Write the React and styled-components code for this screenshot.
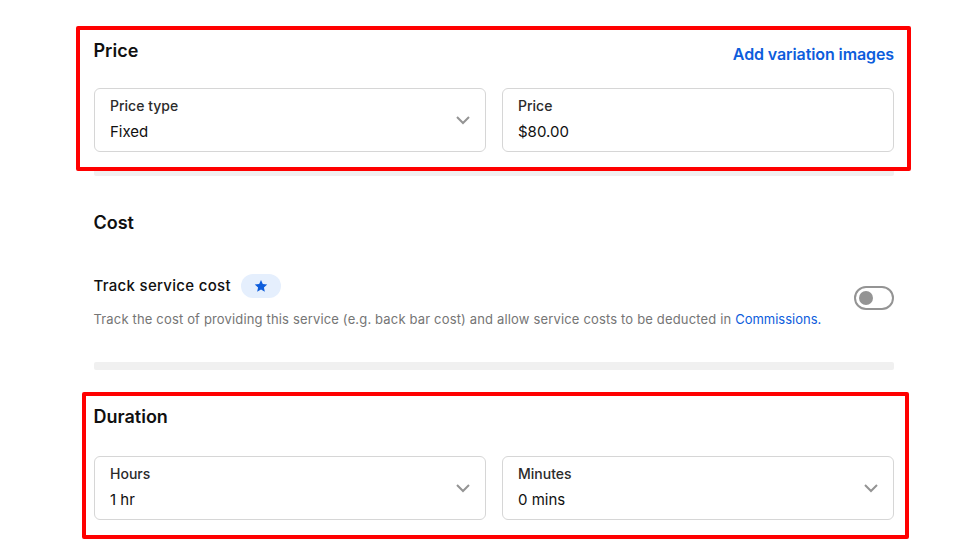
import React from 'react';
import styled, { createGlobalStyle } from 'styled-components';

const GlobalStyle = createGlobalStyle`
  html, body {
    margin: 0;
    padding: 0;
    background: #fff;
    overflow: hidden;
  }
  body {
    font-family: Inter, "Liberation Sans", sans-serif;
    color: #101010;
  }
`;

const Page = styled.div`
  position: relative;
  width: 962px;
  height: 544px;
  overflow: hidden;
  box-sizing: border-box;
  padding: 39px 68px 0 94px;
`;

const Section = styled.section`
  display: flex;
  flex-direction: column;
`;

const HeaderRow = styled.div`
  display: flex;
  justify-content: space-between;
  align-items: flex-start;
  height: ${(p) => p.$height}px;
`;

const Heading = styled.h2`
  margin: 0 0 0 -0.5px;
  font-size: 18px;
  line-height: 24px;
  font-weight: 600;
  color: #101010;
`;

const TextLink = styled.a`
  font-size: 16px;
  line-height: 24px;
  font-weight: 600;
  letter-spacing: -0.1px;
  color: #0d5ddc;
  margin-top: 3px;
`;

const FieldRow = styled.div`
  display: grid;
  grid-template-columns: 1fr 1fr;
  gap: 16px;
`;

const Field = styled.div`
  height: 64px;
  box-sizing: border-box;
  border: 1px solid #d6d6d6;
  border-radius: 6px;
  padding: 7px 15px;
  display: flex;
  align-items: center;
  justify-content: space-between;
  background: #fff;
`;

const FieldText = styled.div`
  display: flex;
  flex-direction: column;
`;

const FieldLabel = styled.span`
  font-size: 14px;
  line-height: 20px;
  font-weight: 500;
  color: #2b2b2b;
`;

const FieldValue = styled.span`
  font-size: 15px;
  line-height: 24px;
  margin-top: 4px;
  color: #101010;
`;

const Chevron = styled.svg`
  width: 16px;
  height: 16px;
  margin: 0 -1px 0 0;
  fill: none;
  stroke: #949494;
  stroke-width: 2;
`;

const Bar = styled.div`
  height: 8px;
  margin-top: ${(p) => p.$top}px;
  border-radius: 2px;
  background: #f0f0f0;
`;

const CostHeading = styled(Heading)`
  margin-top: 35px;
`;

const CostRow = styled.div`
  display: flex;
  align-items: flex-start;
  justify-content: space-between;
  margin-top: 39px;
`;

const CostTitle = styled.div`
  display: flex;
  align-items: center;
  gap: 10px;
  margin-left: -0.5px;
  font-size: 15px;
  line-height: 24px;
  font-weight: 500;
  letter-spacing: 0.3px;
  color: #101010;
`;

const Pill = styled.span`
  display: flex;
  align-items: center;
  justify-content: center;
  width: 40px;
  height: 24px;
  border-radius: 12px;
  background: #e5effd;
`;

const Desc = styled.p`
  margin: 11px 0 0 -0.5px;
  font-size: 13px;
  line-height: 20px;
  letter-spacing: 0.16px;
  color: #757575;
`;

const DescLink = styled.a`
  letter-spacing: 0;
  color: #0d5ddc;
`;

const Toggle = styled.span`
  display: flex;
  align-items: center;
  flex-shrink: 0;
  width: 40px;
  height: 24px;
  margin-top: 12px;
  box-sizing: border-box;
  padding-left: 3px;
  border: 2px solid #949494;
  border-radius: 12px;
  background: #fff;
`;

const Knob = styled.span`
  width: 14px;
  height: 14px;
  border-radius: 50%;
  background: #949494;
`;

const DurationSection = styled(Section)`
  margin-top: 35px;
`;

const Annotation = styled.div`
  position: absolute;
  box-sizing: border-box;
  left: ${(p) => p.$x}px;
  top: ${(p) => p.$y}px;
  width: ${(p) => p.$w}px;
  height: ${(p) => p.$h}px;
  border: 4px solid #ff0000;
  border-radius: 2px;
  pointer-events: none;
`;

const ChevronIcon = () => (
  <Chevron viewBox="0 0 16 16">
    <path d="M2 5l6 6 6-6" />
  </Chevron>
);

const SelectField = ({ label, value }) => (
  <Field>
    <FieldText>
      <FieldLabel>{label}</FieldLabel>
      <FieldValue>{value}</FieldValue>
    </FieldText>
    <ChevronIcon />
  </Field>
);

const InputField = ({ label, value }) => (
  <Field>
    <FieldText>
      <FieldLabel>{label}</FieldLabel>
      <FieldValue>{value}</FieldValue>
    </FieldText>
  </Field>
);

export default function App() {
  return (
    <>
      <GlobalStyle />
      <Page>
        <Section>
          <HeaderRow $height={49}>
            <Heading>Price</Heading>
            <TextLink>Add variation images</TextLink>
          </HeaderRow>
          <FieldRow>
            <SelectField label="Price type" value="Fixed" />
            <InputField label="Price" value="$80.00" />
          </FieldRow>
          <Bar $top={16} />
        </Section>

        <Section>
          <CostHeading>Cost</CostHeading>
          <CostRow>
            <div>
              <CostTitle>
                Track service cost
                <Pill>
                  <svg width="14" height="14" viewBox="0 0 24 24" fill="#0d5ddc">
                    <path d="M12 1.5l3.1 7 7.6.8-5.7 5.1 1.6 7.5L12 18l-6.6 3.9L7 14.4 1.3 9.3l7.6-.8z" />
                  </svg>
                </Pill>
              </CostTitle>
              <Desc>
                Track the cost of providing this service (e.g. back bar cost) and allow service costs to be deducted in{' '}
                <DescLink>Commissions.</DescLink>
              </Desc>
            </div>
            <Toggle>
              <Knob />
            </Toggle>
          </CostRow>
          <Bar $top={33} />
        </Section>

        <DurationSection>
          <HeaderRow $height={51}>
            <Heading>Duration</Heading>
          </HeaderRow>
          <FieldRow>
            <SelectField label="Hours" value="1 hr" />
            <SelectField label="Minutes" value="0 mins" />
          </FieldRow>
        </DurationSection>

        <Annotation $x={76} $y={26} $w={835} $h={145} />
        <Annotation $x={82} $y={392} $w={827} $h={147} />
      </Page>
    </>
  );
}
